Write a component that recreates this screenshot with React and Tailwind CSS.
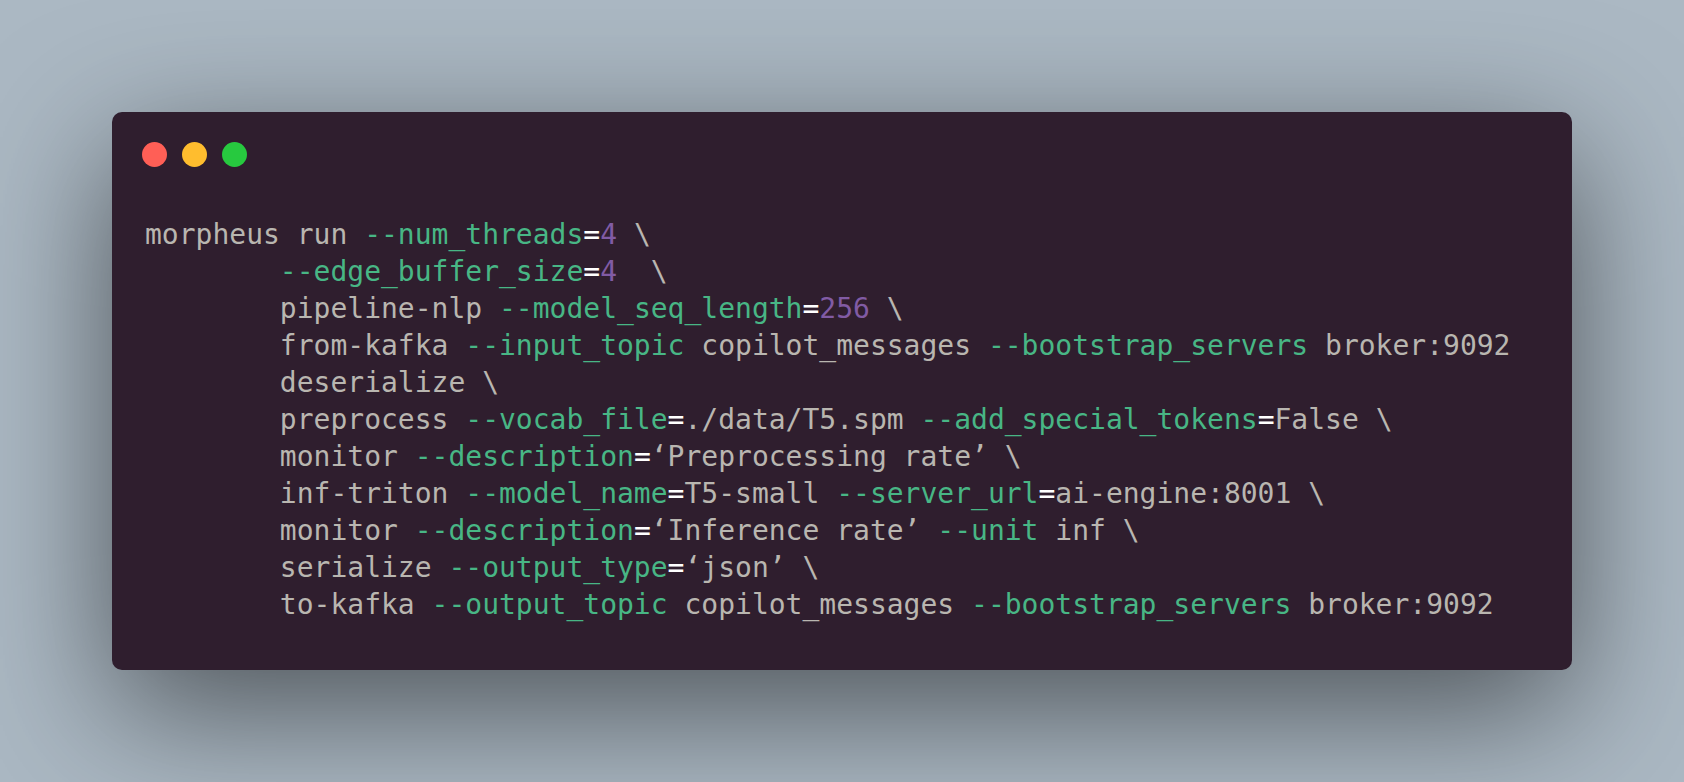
const INDENT = "        ";

// [kind, text] — t: plain, f: flag, o: operator, n: number
const lines = [
  [["t", "morpheus run "], ["f", "--num_threads"], ["o", "="], ["n", "4"], ["t", " \\"]],
  [["t", INDENT], ["f", "--edge_buffer_size"], ["o", "="], ["n", "4"], ["t", "  \\"]],
  [["t", INDENT + "pipeline-nlp "], ["f", "--model_seq_length"], ["o", "="], ["n", "256"], ["t", " \\"]],
  [
    ["t", INDENT + "from-kafka "],
    ["f", "--input_topic"],
    ["t", " copilot_messages "],
    ["f", "--bootstrap_servers"],
    ["t", " broker:9092"],
  ],
  [["t", INDENT + "deserialize \\"]],
  [
    ["t", INDENT + "preprocess "],
    ["f", "--vocab_file"],
    ["o", "="],
    ["t", "./data/T5.spm "],
    ["f", "--add_special_tokens"],
    ["o", "="],
    ["t", "False \\"],
  ],
  [["t", INDENT + "monitor "], ["f", "--description"], ["o", "="], ["t", "‘Preprocessing rate’ \\"]],
  [
    ["t", INDENT + "inf-triton "],
    ["f", "--model_name"],
    ["o", "="],
    ["t", "T5-small "],
    ["f", "--server_url"],
    ["o", "="],
    ["t", "ai-engine:8001 \\"],
  ],
  [
    ["t", INDENT + "monitor "],
    ["f", "--description"],
    ["o", "="],
    ["t", "‘Inference rate’ "],
    ["f", "--unit"],
    ["t", " inf \\"],
  ],
  [["t", INDENT + "serialize "], ["f", "--output_type"], ["o", "="], ["t", "‘json’ \\"]],
  [
    ["t", INDENT + "to-kafka "],
    ["f", "--output_topic"],
    ["t", " copilot_messages "],
    ["f", "--bootstrap_servers"],
    ["t", " broker:9092"],
  ],
];

const tone = {
  t: "text-[#b9b6b0]",
  f: "text-[#48b685]",
  o: "text-white",
  n: "text-[#815ba4]",
};

export default function App() {
  return (
    <div className="flex min-h-screen items-center justify-center bg-[#abb8c3]">
      <div className="w-[1460px] rounded-[10px] bg-[#2f1e2e] pt-[30px] pb-[47px] shadow-[0_40px_136px_rgba(0,0,0,0.55)]">
        {/* window controls */}
        <div className="flex h-[25px] gap-[15px] pl-[30px]">
          <span className="h-[25px] w-[25px] rounded-full bg-[#ff5f56]" />
          <span className="h-[25px] w-[25px] rounded-full bg-[#ffbd2e]" />
          <span className="h-[25px] w-[25px] rounded-full bg-[#27c93f]" />
        </div>

        <pre className="mt-[49px] pl-[33px] font-['DejaVu_Sans_Mono',monospace] text-[28px] leading-[37px]">
          {lines.map((line, i) => (
            <div key={i} className="whitespace-pre">
              {line.map(([kind, text], j) => (
                <span key={j} className={tone[kind]}>
                  {text}
                </span>
              ))}
            </div>
          ))}
        </pre>
      </div>
    </div>
  );
}
